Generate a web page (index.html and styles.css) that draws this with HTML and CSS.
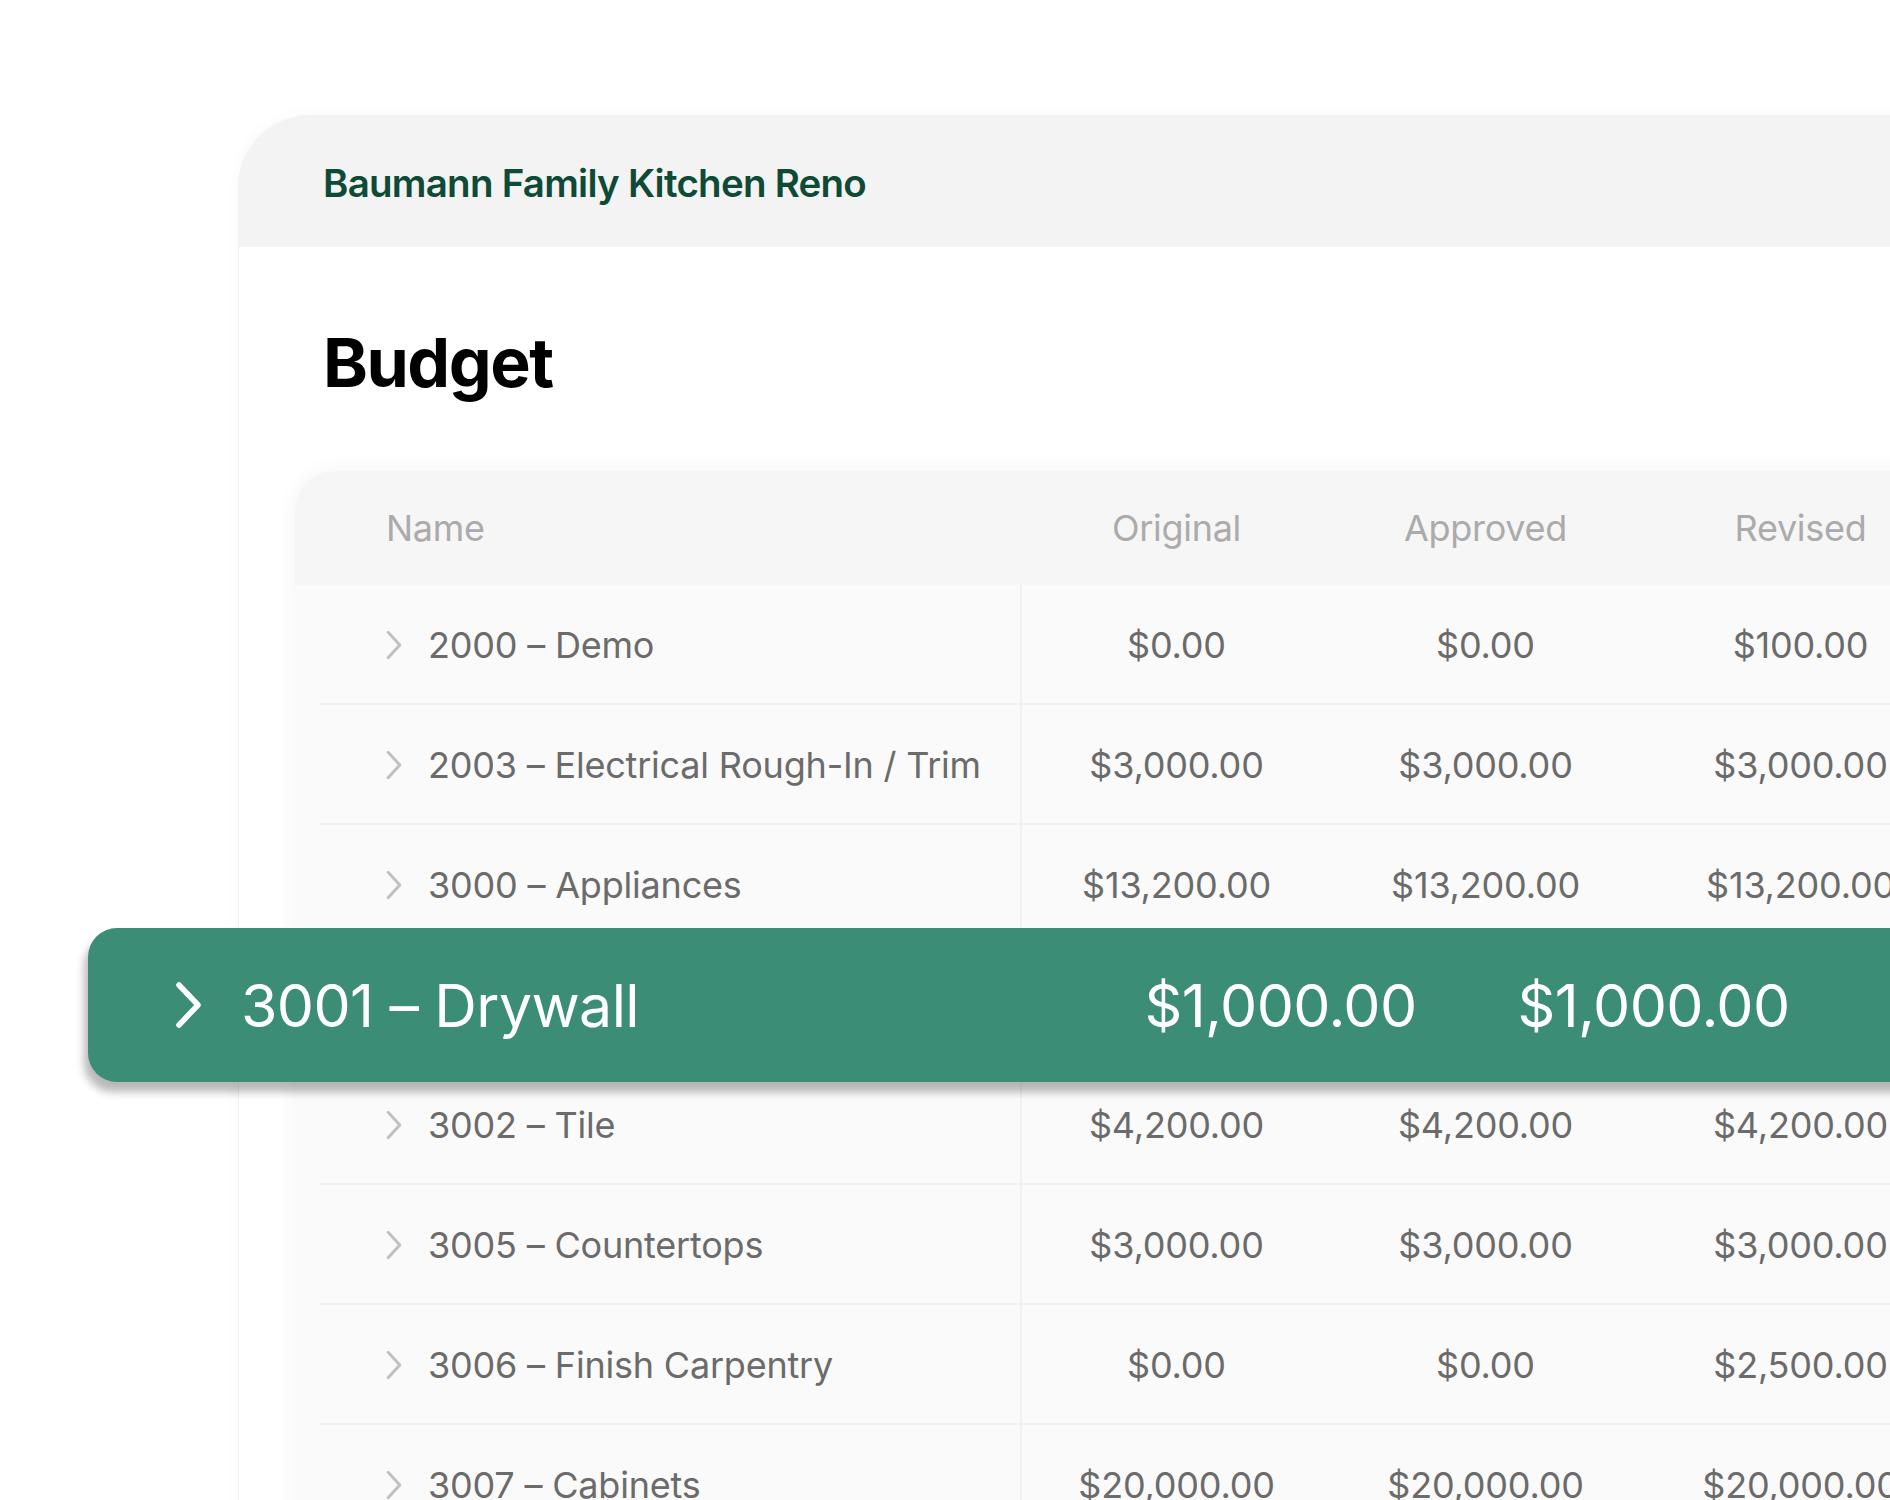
FILE: index.html
```html
<!DOCTYPE html>
<html lang="en">
<head>
<meta charset="utf-8">
<title>Budget – Baumann Family Kitchen Reno</title>
<link rel="stylesheet" href="styles.css">
</head>
<body>
<div class="page">
  <div class="card">
    <header class="card-head">
      <h2 class="project">Baumann Family Kitchen Reno</h2>
    </header>
    <div class="card-body">
      <h1 class="title">Budget</h1>
      <div class="table">
        <div class="thead">
          <div class="cell name">Name</div>
          <div class="cell num">Original</div>
          <div class="cell num">Approved</div>
          <div class="cell num">Revised</div>
        </div>
        <div class="tbody">
          <div class="row">
            <div class="cell name"><svg class="chev" viewBox="0 0 16 28"><path d="M2 2 L13 14 L2 26"/></svg><span>2000 – Demo</span></div>
            <div class="cell num">$0.00</div>
            <div class="cell num">$0.00</div>
            <div class="cell num">$100.00</div>
          </div>
          <div class="row">
            <div class="cell name"><svg class="chev" viewBox="0 0 16 28"><path d="M2 2 L13 14 L2 26"/></svg><span>2003 – Electrical Rough-In / Trim</span></div>
            <div class="cell num">$3,000.00</div>
            <div class="cell num">$3,000.00</div>
            <div class="cell num">$3,000.00</div>
          </div>
          <div class="row">
            <div class="cell name"><svg class="chev" viewBox="0 0 16 28"><path d="M2 2 L13 14 L2 26"/></svg><span>3000 – Appliances</span></div>
            <div class="cell num">$13,200.00</div>
            <div class="cell num">$13,200.00</div>
            <div class="cell num">$13,200.00</div>
          </div>
          <div class="row">
            <div class="cell name"></div>
            <div class="cell num"></div>
            <div class="cell num"></div>
            <div class="cell num"></div>
          </div>
          <div class="row">
            <div class="cell name"><svg class="chev" viewBox="0 0 16 28"><path d="M2 2 L13 14 L2 26"/></svg><span>3002 – Tile</span></div>
            <div class="cell num">$4,200.00</div>
            <div class="cell num">$4,200.00</div>
            <div class="cell num">$4,200.00</div>
          </div>
          <div class="row">
            <div class="cell name"><svg class="chev" viewBox="0 0 16 28"><path d="M2 2 L13 14 L2 26"/></svg><span>3005 – Countertops</span></div>
            <div class="cell num">$3,000.00</div>
            <div class="cell num">$3,000.00</div>
            <div class="cell num">$3,000.00</div>
          </div>
          <div class="row">
            <div class="cell name"><svg class="chev" viewBox="0 0 16 28"><path d="M2 2 L13 14 L2 26"/></svg><span>3006 – Finish Carpentry</span></div>
            <div class="cell num">$0.00</div>
            <div class="cell num">$0.00</div>
            <div class="cell num">$2,500.00</div>
          </div>
          <div class="row">
            <div class="cell name"><svg class="chev" viewBox="0 0 16 28"><path d="M2 2 L13 14 L2 26"/></svg><span>3007 – Cabinets</span></div>
            <div class="cell num">$20,000.00</div>
            <div class="cell num">$20,000.00</div>
            <div class="cell num">$20,000.00</div>
          </div>
        </div>
      </div>
    </div>
  </div>

  <div class="focus-row">
    <div class="focus-name"><svg class="focus-chev" viewBox="0 0 28 48"><path d="M4 4 L23 24 L4 44"/></svg><span>3001 – Drywall</span></div>
    <div class="focus-num">$1,000.00</div>
    <div class="focus-num">$1,000.00</div>
    <div class="focus-num"></div>
  </div>
</div>
</body>
</html>
```

FILE: styles.css
```css
html, body {
  margin: 0;
  padding: 0;
  background: #ffffff;
}

body {
  font-family: "Inter", "Noto Sans", "Liberation Sans", sans-serif;
}

.page {
  position: relative;
  width: 1890px;
  height: 1500px;
  overflow: hidden;
  background: #ffffff;
}

.card {
  margin: 115px 0 0 239px;
  width: 1800px;
  height: 1500px;
  background: #ffffff;
  border-top-left-radius: 72px;
  box-shadow: -1px 0 0 #f0f0f0, 0 0 18px rgba(0, 0, 0, 0.03);
  overflow: hidden;
}

.card-head {
  height: 132px;
  background: #f2f3f2;
  display: flex;
  align-items: center;
  padding-left: 84px;
}

.project {
  margin: 4px 0 0 0;
  font-size: 38.5px;
  font-weight: 600;
  letter-spacing: -0.75px;
  color: #0e4a36;
}

.card-body {
  padding: 81px 0 0 56px;
}

.title {
  margin: 0 0 0 28px;
  font-size: 68px;
  line-height: 68px;
  font-weight: 700;
  letter-spacing: -1.5px;
  color: #000000;
}

.table {
  margin-top: 75px;
  width: 1800px;
  border-top-left-radius: 40px;
  background: #fafafa;
  box-shadow: 0 0 22px rgba(0, 0, 0, 0.05);
  overflow: hidden;
}

.thead {
  display: grid;
  grid-template-columns: 727px 309px 309px 321px 1fr;
  height: 114px;
  align-items: center;
  background: #f6f6f6;
  color: #ababab;
  font-size: 36px;
  letter-spacing: -0.3px;
}

.thead .name {
  padding-left: 91px;
}

.row {
  display: grid;
  grid-template-columns: 727px 309px 309px 321px 1fr;
  height: 120px;
  align-items: stretch;
  background: linear-gradient(#f1f1f1, #f1f1f1) no-repeat 24px 100% / 100% 2px, #fafafa;
  color: #6b6b6b;
  font-size: 36px;
  letter-spacing: -0.2px;
}

.cell {
  display: flex;
  align-items: center;
  white-space: nowrap;
}

.num {
  justify-content: center;
}

.row .name {
  padding-left: 91px;
  border-right: 2px solid #f2f2f2;
}

.chev {
  width: 17px;
  height: 30px;
  margin-right: 25px;
  flex: none;
}

.chev path {
  fill: none;
  stroke: #c0c0c0;
  stroke-width: 2.8;
  stroke-linecap: round;
  stroke-linejoin: round;
}

.focus-row {
  position: absolute;
  left: 88px;
  top: 928px;
  width: 1900px;
  height: 154px;
  display: grid;
  grid-template-columns: 1006px 373px 373px 1fr;
  align-items: center;
  background: #3b8d75;
  border-radius: 29px;
  box-shadow: -4px 10px 8px rgba(0, 0, 0, 0.28);
  color: #ffffff;
  font-size: 59px;
  letter-spacing: -0.6px;
}

.focus-name {
  display: flex;
  align-items: center;
  padding-left: 87px;
  white-space: nowrap;
}

.focus-chev {
  width: 28px;
  height: 48px;
  margin-right: 38px;
  flex: none;
}

.focus-chev path {
  fill: none;
  stroke: #ffffff;
  stroke-width: 5.5;
  stroke-linecap: round;
  stroke-linejoin: round;
}

.focus-num {
  text-align: center;
  white-space: nowrap;
}
```
